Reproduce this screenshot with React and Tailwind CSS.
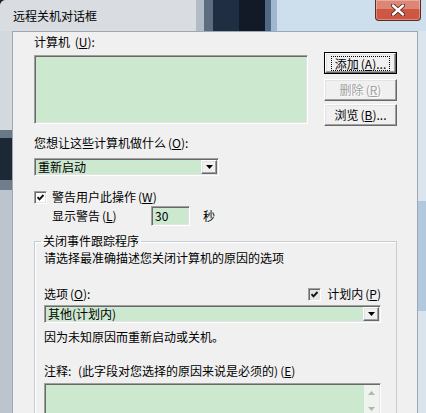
import React from "react";

// classic win32 control borders
const sunken =
  "border border-t-[#a0a0a0] border-l-[#a0a0a0] border-r-white border-b-white shadow-[inset_1px_1px_0_#696969,inset_-1px_-1px_0_#e3e3e3]";
const raised =
  "border border-t-white border-l-white border-r-[#696969] border-b-[#696969] shadow-[inset_-1px_-1px_0_#a0a0a0,inset_1px_1px_0_#e3e3e3]";

function Key({ k }) {
  return (
    <span className="ml-[2px]">
      (<span className="underline underline-offset-1">{k}</span>)
    </span>
  );
}

function Arrow({ color = "#000", up = false }) {
  return (
    <svg width="7" height="4" viewBox="0 0 7 4">
      <path d={up ? "M0 4h7L3.5 0z" : "M0 0h7L3.5 4z"} fill={color} />
    </svg>
  );
}

function Combo({ text, className }) {
  return (
    <div className={`flex h-[18px] bg-[#cce8cf] ${sunken} ${className}`}>
      <div className="flex-1 pl-[3px] text-[12px] leading-[16px] text-black">{text}</div>
      <div className={`m-[1px] flex w-[16px] items-center justify-center bg-[#f0f0f0] ${raised}`}>
        <Arrow />
      </div>
    </div>
  );
}

function Check({ grey = false }) {
  return (
    <div
      className={`flex h-[13px] w-[13px] items-center justify-center ${sunken} ${
        grey ? "bg-[#e4e4e4]" : "bg-white"
      }`}
    >
      <svg width="9" height="9" viewBox="0 0 9 9">
        <path d="M1.5 4.2l2 2.2 4-4.4" stroke="#111" strokeWidth="1.9" fill="none" />
      </svg>
    </div>
  );
}

function Btn({ children, def = false, disabled = false, className = "" }) {
  if (def) {
    return (
      <div className={`h-[22px] border border-black ${className}`}>
        <div className={`flex h-full items-center justify-center bg-[#f0f0f0] ${raised}`}>
          <div className="border border-dotted border-black px-[3px] text-[12px] leading-[13px]">
            {children}
          </div>
        </div>
      </div>
    );
  }
  return (
    <div
      className={`flex h-[22px] items-center justify-center bg-[#f0f0f0] text-[12px] ${raised} ${
        disabled ? "text-[#a0a0a0] [text-shadow:1px_1px_0_#fff]" : "text-black"
      } ${className}`}
    >
      {children}
    </div>
  );
}

export default function App() {
  return (
    <div className="h-[413px] w-[426px] overflow-hidden bg-[#202630] font-['Noto_Sans_CJK_SC','Noto_Sans',sans-serif] text-black">
      <div className="flex h-full flex-col overflow-hidden rounded-tl-[6px] bg-[#d3d8de]">
        {/* title bar: aero glass with the desktop showing through */}
        <div className="flex h-[31px] shrink-0">
          <div className="w-[196px] bg-[#d9dde2] pl-[13px] pt-[8px] text-[12px] leading-[16px]">远程关机对话框</div>
          <div className="w-[8px] bg-[#b3bcc6]" />
          <div className="w-[9px] bg-[#5d6d80]" />
          <div className="w-[26px] bg-[#1f2e42]" />
          <div className="w-[26px] bg-[#111a26]" />
          <div className="w-[6px] bg-[#4f6883]" />
          <div className="w-[6px] bg-[#9fb8cf]" />
          <div className="flex flex-1 items-start justify-end bg-[#cddeed] pr-[5px]">
            <div className="flex h-[21px] w-[46px] items-center justify-center rounded-b-[4px] border border-t-0 border-[#5e2a22] bg-[#cc5844] shadow-[inset_0_0_0_1px_rgba(255,255,255,0.3),inset_0_9px_0_rgba(255,220,210,0.35)]">
              <svg width="14" height="12" viewBox="0 0 14 12">
                <path
                  d="M2 1.5l10 9M12 1.5l-10 9"
                  stroke="#5a231c"
                  strokeWidth="4.2"
                  strokeLinecap="round"
                />
                <path d="M2 1.5l10 9M12 1.5l-10 9" stroke="#fff" strokeWidth="2.4" strokeLinecap="round" />
              </svg>
            </div>
          </div>
        </div>

        <div className="flex flex-1">
          <div className="flex w-[12px] flex-col">
            <div className="h-[99px] bg-[#d4d9de]" />
            <div className="h-[8px] bg-[#6b7888]" />
            <div className="h-[42px] bg-[#1d2836]" />
            <div className="h-[10px] bg-[#6f7d8d]" />
            <div className="flex-1 bg-[#bcc4cd]" />
          </div>
          {/* client area */}
          <div className="flex-1 border-l border-t border-r border-[#9ea8b3] bg-[#f0f0f0] pl-[21px] pr-[20px] text-[12px] leading-[14px]">
            <div className="mt-[3px] h-[14px]">
              计算机 <Key k="U" />:
            </div>

            <div className="mt-[3px] flex items-start">
              <div className={`mt-[3px] h-[69px] w-[274px] bg-[#cce8cf] ${sunken}`} />
              <div className="ml-auto flex w-[73px] flex-col">
                <Btn def>
                  添加<Key k="A" />...
                </Btn>
                <Btn disabled className="mt-[5px]">
                  删除<Key k="R" />
                </Btn>
                <Btn className="mt-[3px]">
                  浏览<Key k="B" />...
                </Btn>
              </div>
            </div>

            <div className="mt-[10px] h-[14px]">
              您想让这些计算机做什么<Key k="O" />:
            </div>
            <Combo text="重新启动" className="mt-[8px] w-[185px]" />

            <div className="mt-[14px] flex h-[14px] items-center">
              <Check />
              <span className="ml-[5px]">
                警告用户此操作<Key k="W" />
              </span>
            </div>

            <div className="mt-[2px] flex h-[20px] items-center pl-[18px]">
              <span className="w-[99px]">
                显示警告<Key k="L" />
              </span>
              <div className={`flex h-[20px] w-[39px] items-center bg-[#cce8cf] pl-[3px] ${sunken}`}>30</div>
              <span className="ml-[13px]">秒</span>
            </div>

            <fieldset className="mt-[8px] border border-[#c5ccd3] shadow-[inset_1px_1px_0_#fff]">
              <legend className="ml-[6px] px-[2px] leading-[14px]">关闭事件跟踪程序</legend>
              <div className="pl-[9px] pr-[15px]">
                <div className="mt-[3px] h-[14px]">请选择最准确描述您关闭计算机的原因的选项</div>

                <div className="mt-[22px] flex h-[14px] items-center">
                  <span>
                    选项<Key k="O" />:
                  </span>
                  <div className="ml-auto flex items-center">
                    <Check grey />
                    <span className="ml-[6px]">
                      计划内<Key k="P" />
                    </span>
                  </div>
                </div>

                <Combo text="其他(计划内)" className="mt-[4px] w-full" />

                <div className="mt-[7px] h-[14px]">因为未知原因而重新启动或关机。</div>
                <div className="mt-[20px] h-[14px]">
                  注释: <span className="ml-[4px]">(此字段对您选择的原因来说是必须的)</span>
                  <Key k="E" />
                </div>

                <div className={`mt-[5px] flex h-[60px] bg-[#cce8cf] ${sunken}`}>
                  <div className="flex-1" />
                  <div className="m-[1px] flex w-[15px] flex-col bg-[#eef3ee]">
                    <div className="flex h-[16px] items-center justify-center">
                      <Arrow up color="#b4b4b4" />
                    </div>
                    <div className="flex h-[16px] items-center justify-center">
                      <Arrow color="#b4b4b4" />
                    </div>
                  </div>
                </div>
              </div>
            </fieldset>
          </div>
          <div className="flex w-[8px] flex-col">
            <div className="h-[170px] bg-[#dbe5ee]" />
            <div className="h-[110px] bg-[#b2c9dd]" />
            <div className="flex-1 bg-[#dae4ed]" />
          </div>
        </div>
      </div>
    </div>
  );
}
